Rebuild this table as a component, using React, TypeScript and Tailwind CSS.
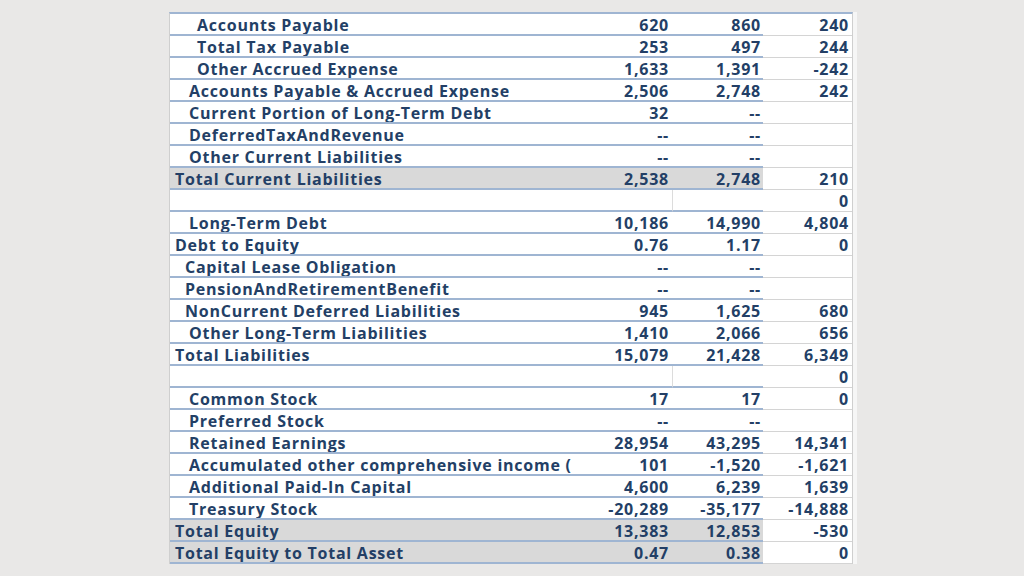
import React from "react";

type Row = { label: string; indent: number; a: string; b: string; c: string; gray?: boolean; empty?: boolean };

const rows: Row[] = [
  { label: "Accounts Payable", indent: 3, a: "620", b: "860", c: "240" },
  { label: "Total Tax Payable", indent: 3, a: "253", b: "497", c: "244" },
  { label: "Other Accrued Expense", indent: 3, a: "1,633", b: "1,391", c: "-242" },
  { label: "Accounts Payable & Accrued Expense", indent: 2, a: "2,506", b: "2,748", c: "242" },
  { label: "Current Portion of Long-Term Debt", indent: 2, a: "32", b: "--", c: "" },
  { label: "DeferredTaxAndRevenue", indent: 2, a: "--", b: "--", c: "" },
  { label: "Other Current Liabilities", indent: 2, a: "--", b: "--", c: "" },
  { label: "Total Current Liabilities", indent: 0, a: "2,538", b: "2,748", c: "210", gray: true },
  { label: "", indent: 0, a: "", b: "", c: "0", empty: true },
  { label: "Long-Term Debt", indent: 2, a: "10,186", b: "14,990", c: "4,804" },
  { label: "Debt to Equity", indent: 0, a: "0.76", b: "1.17", c: "0" },
  { label: "Capital Lease Obligation", indent: 1, a: "--", b: "--", c: "" },
  { label: "PensionAndRetirementBenefit", indent: 1, a: "--", b: "--", c: "" },
  { label: "NonCurrent Deferred Liabilities", indent: 1, a: "945", b: "1,625", c: "680" },
  { label: "Other Long-Term Liabilities", indent: 2, a: "1,410", b: "2,066", c: "656" },
  { label: "Total Liabilities", indent: 0, a: "15,079", b: "21,428", c: "6,349" },
  { label: "", indent: 0, a: "", b: "", c: "0", empty: true },
  { label: "Common Stock", indent: 2, a: "17", b: "17", c: "0" },
  { label: "Preferred Stock", indent: 2, a: "--", b: "--", c: "" },
  { label: "Retained Earnings", indent: 2, a: "28,954", b: "43,295", c: "14,341" },
  { label: "Accumulated other comprehensive income (", indent: 2, a: "101", b: "-1,520", c: "-1,621" },
  { label: "Additional Paid-In Capital", indent: 2, a: "4,600", b: "6,239", c: "1,639" },
  { label: "Treasury Stock", indent: 2, a: "-20,289", b: "-35,177", c: "-14,888" },
  { label: "Total Equity", indent: 0, a: "13,383", b: "12,853", c: "-530", gray: true },
  { label: "Total Equity to Total Asset", indent: 0, a: "0.47", b: "0.38", c: "0", gray: true },
];

const indentCls = ["pl-[5px]", "pl-[15px]", "pl-[19px]", "pl-[27px]"];

export default function App() {
  return (
    <div
      className="w-[1024px] h-[576px] overflow-hidden bg-[#e9e8e7] pt-[12px] pl-[169px]"
      style={{ fontFamily: '"Open Sans", "DejaVu Sans", sans-serif' }}
    >
      <div className="w-[688px] flex">
        <div className="w-[684px] bg-white border-l border-r border-[#cfcfcf] border-t-2 border-t-[#9fb5d2] relative">
          {rows.map((r, i) => {
            const fill = r.gray ? "bg-[#d9d9d9]" : "bg-white";
            return (
              <div key={i} className="flex h-[22px] text-[16px] tracking-[0.75px] font-bold text-[#233f66] leading-[22px]">
                <div className={`w-[411px] shrink-0 ${fill} border-b-2 border-[#9fb5d2] ${indentCls[r.indent]} whitespace-nowrap overflow-hidden`}>
                  {r.label}
                </div>
                <div className={`w-[92px] shrink-0 ${fill} border-b-2 border-[#9fb5d2] text-right pr-[4px] ${r.empty ? "border-r border-r-[#dcdcdc]" : ""}`}>
                  {r.a}
                </div>
                <div className={`w-[90px] shrink-0 ${fill} border-b-2 border-[#9fb5d2] text-right pr-[2px]`}>
                  {r.b}
                </div>
                <div className="w-[89px] shrink-0 bg-white border-b border-[#d4d4d4] text-right pr-[3px] leading-[23px]">
                  {r.c}
                </div>
              </div>
            );
          })}
        </div>
        <div className="w-[4px] bg-[#f6f6f6]" />
      </div>
    </div>
  );
}
